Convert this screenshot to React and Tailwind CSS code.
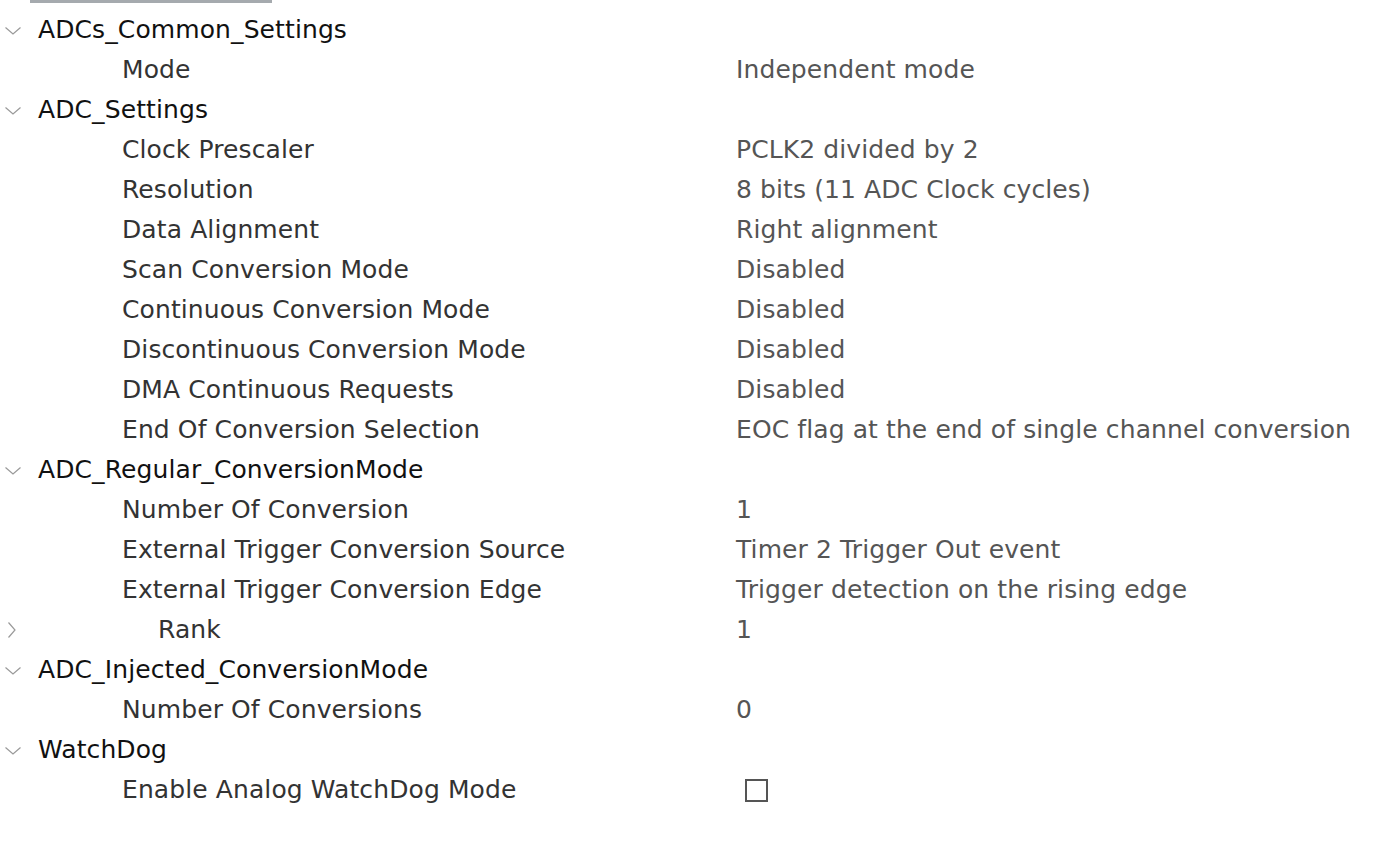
const rows = [
  { type: 'group', label: 'ADCs_Common_Settings' },
  { label: 'Mode', value: 'Independent mode' },
  { type: 'group', label: 'ADC_Settings' },
  { label: 'Clock Prescaler', value: 'PCLK2 divided by 2' },
  { label: 'Resolution', value: '8 bits (11 ADC Clock cycles)' },
  { label: 'Data Alignment', value: 'Right alignment' },
  { label: 'Scan Conversion Mode', value: 'Disabled' },
  { label: 'Continuous Conversion Mode', value: 'Disabled' },
  { label: 'Discontinuous Conversion Mode', value: 'Disabled' },
  { label: 'DMA Continuous Requests', value: 'Disabled' },
  { label: 'End Of Conversion Selection', value: 'EOC flag at the end of single channel conversion' },
  { type: 'group', label: 'ADC_Regular_ConversionMode' },
  { label: 'Number Of Conversion', value: '1' },
  { label: 'External Trigger Conversion Source', value: 'Timer 2 Trigger Out event' },
  { label: 'External Trigger Conversion Edge', value: 'Trigger detection on the rising edge' },
  { type: 'collapsed', label: 'Rank', value: '1' },
  { type: 'group', label: 'ADC_Injected_ConversionMode' },
  { label: 'Number Of Conversions', value: '0' },
  { type: 'group', label: 'WatchDog' },
  { label: 'Enable Analog WatchDog Mode', checkbox: true },
];

function Chevron({ open }) {
  return open ? (
    <svg width="18" height="12" viewBox="0 0 18 12" className="text-[#9a9a9a]">
      <path d="M1.5 2.5 L9 9 L16.5 2.5" fill="none" stroke="currentColor" strokeWidth="1.2" />
    </svg>
  ) : (
    <svg width="12" height="18" viewBox="0 0 12 18" className="text-[#9a9a9a]">
      <path d="M2.5 1.5 L9 9 L2.5 16.5" fill="none" stroke="currentColor" strokeWidth="1.2" />
    </svg>
  );
}

export default function App() {
  return (
    <div className="w-[1382px] h-[844px] bg-white overflow-hidden font-['DejaVu_Sans',sans-serif] text-[25px] tracking-[0.1px]">
      <div className="ml-[30px] w-[242px] h-[3px] bg-[#a5aaae]" />
      <div className="pt-[7px]">
        {rows.map((r, i) => (
          <div key={i} className="h-[40px] flex items-center">
            {r.type === 'group' ? (
              <>
                <div className="w-[38px] pl-[4px] pt-[2px] flex items-center">
                  <Chevron open />
                </div>
                <span className="text-[#111]">{r.label}</span>
              </>
            ) : (
              <>
                <div className="w-[736px] flex items-center">
                  {r.type === 'collapsed' ? (
                    <>
                      <div className="w-[158px] pl-[6px] flex items-center">
                        <Chevron />
                      </div>
                      <span className="text-[#333]">{r.label}</span>
                    </>
                  ) : (
                    <span className="pl-[122px] text-[#333]">{r.label}</span>
                  )}
                </div>
                {r.checkbox ? (
                  <div className="ml-[9px] w-[23px] h-[23px] border-2 border-[#555]" />
                ) : (
                  <span className="text-[#555]">{r.value}</span>
                )}
              </>
            )}
          </div>
        ))}
      </div>
    </div>
  );
}
